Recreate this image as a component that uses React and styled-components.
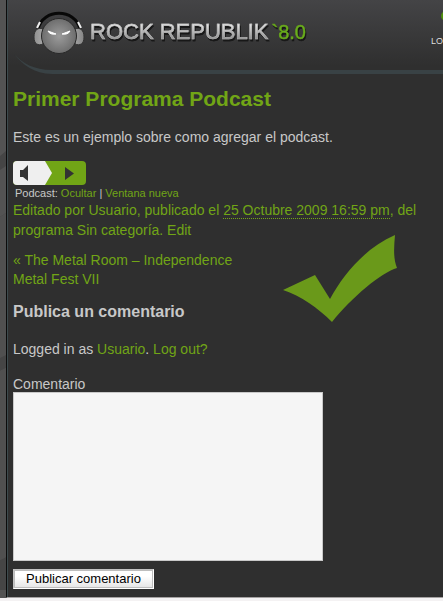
import React from "react";
import styled, { createGlobalStyle } from "styled-components";

const GlobalStyle = createGlobalStyle`
  * { box-sizing: border-box; }
  html, body, #root { min-height: 100vh; }
  body {
    margin: 0;
    background: #2f2f2f;
    color: #c8c8c8;
    font: 14px/20px "Liberation Sans", Arial, sans-serif;
  }
  #root { display: flex; }
`;

const green = "#71a516";

const Page = styled.div`
  flex: 1;
  min-width: 0;
  display: grid;
  grid-template-columns: 6px minmax(0, 1fr);
  border-bottom: 3px solid #f4f2f3;
`;

const Rail = styled.div`
  background: #535353;
  overflow: hidden;
  svg { display: block; }
`;

const Column = styled.div`
  border-left: 1px solid #0c0c0c;
  border-bottom: 1px solid #a5a2a2;
  box-shadow: inset 1px 0 #3d4b4e;
`;

const Header = styled.header`
  margin-left: 1px;
  background: linear-gradient(#444446, #2f2f2f 66px);
`;

const Brand = styled.div`
  display: flex;
  justify-content: space-between;
  height: 54px;
  padding: 10px 0 0 25px;
  overflow: hidden;
`;

const Logo = styled.a`
  display: flex;
  align-items: center;
  gap: 5px;
  text-decoration: none;
  white-space: nowrap;
`;

const Name = styled.span`
  font-size: 22px;
  line-height: 24px;
  -webkit-text-stroke: 0.5px #b5b5b5;
  background: linear-gradient(#e2e2e2 20%, #888 85%);
  background-clip: text;
  color: transparent;
  filter: drop-shadow(1px 2px 0 #171717);
`;

const Version = styled.span`
  font-size: 20px;
  line-height: 24px;
  margin-left: -2px;
  -webkit-text-stroke: 0.5px #68a41b;
  color: #68b01b;
  filter: drop-shadow(1px 2px 0 #171717);
`;

const Login = styled.a`
  width: 12px;
  flex: none;
  display: flex;
  flex-direction: column;
  align-items: flex-end;
  gap: 15px;
  font-size: 9px;
  line-height: 12px;
  color: #dedede;
  text-decoration: none;
`;

const Divider = styled.div`
  display: flex;
  height: 20px;
  padding-left: 6px;
  svg { flex: none; }
  &::after {
    content: "";
    flex: 1;
    height: 4px;
    margin-top: 16px;
    background: #394245;
  }
`;

const Article = styled.main`
  padding: 12px 6px 8px;
`;

const Title = styled.h1`
  margin: 0 0 15px;
  font-size: 21px;
  line-height: 26px;
  color: ${green};
`;

const Text = styled.p`
  margin: 0;
`;

const Link = styled.a`
  color: ${green};
  text-decoration: none;
`;

const Player = styled.button`
  display: block;
  margin: 14px 0 0;
  padding: 0;
  border: 0;
  background: none;
  svg { display: block; }
`;

const Caption = styled.p`
  margin: 2px 0 0 2px;
  font-size: 11px;
  line-height: 13px;
`;

const Meta = styled.p`
  margin: 0;
  color: ${green};
`;

const Time = styled.time`
  border-bottom: 1px dotted ${green};
`;

const Around = styled.div`
  position: relative;
  padding-top: 11px;
`;

const Previous = styled.nav`
  max-width: 240px;
  line-height: 19px;
`;

const Tick = styled.svg`
  position: absolute;
  left: 270px;
  top: -6px;
`;

const Subtitle = styled.h2`
  margin: 13px 0 17px;
  font-size: 16px;
  line-height: 20px;
`;

const Form = styled.form`
  margin-top: 17px;
`;

const Label = styled.label`
  display: block;
  line-height: 16px;
`;

const Comment = styled.textarea`
  display: block;
  width: 310px;
  max-width: 100%;
  height: 169px;
  border: 1px solid #c9c9c9;
  border-radius: 0;
  background: #f5f5f5;
  resize: none;
  outline: 0;
`;

const Submit = styled.button`
  display: block;
  height: 20px;
  margin-top: 8px;
  padding: 0 12px;
  border: 1px solid;
  border-color: #c2c2c2 #fff #fff #c2c2c2;
  box-shadow: inset 0 0 0 1px #bdbdbd;
  background: linear-gradient(#fff 35%, #e4e4e4);
  color: #000;
  font: 13px/16px "Liberation Sans", Arial, sans-serif;
`;

function Mascot() {
  return (
    <svg width="52" height="44" viewBox="0 0 52 44" aria-hidden="true">
      <defs>
        <radialGradient id="face">
          <stop offset="0" stopColor="#9c9c9c" />
          <stop offset="1" stopColor="#6d6d6d" />
        </radialGradient>
        <linearGradient id="cup" x2="1">
          <stop offset="0" stopColor="#909090" />
          <stop offset=".5" stopColor="#d0d0d0" />
          <stop offset="1" stopColor="#858585" />
        </linearGradient>
      </defs>
      <path d="M5 19C10-2 42-2 47 19" fill="none" stroke="#080808" strokeWidth="3" />
      <path d="M4 18L7 12M48 18L45 12" stroke="#eee" strokeWidth="2" />
      <path d="M10 19C5 17 1 20 1 27S5 36 10 34ZM42 19C47 17 51 20 51 27S47 36 42 34Z" fill="url(#cup)" stroke="#333" />
      <circle cx="26" cy="26" r="17.5" fill="url(#face)" stroke="#292929" />
      <path d="M15 21L23 24Q17 25 15 21M37 21L29 24Q35 25 37 21" fill="#fff" stroke="#fff" />
    </svg>
  );
}

export default function App() {
  return (
    <>
      <GlobalStyle />
      <Page>
        <Rail>
          <svg width="6" height="590" aria-hidden="true">
            <path d="M0 156L6 151V166L0 170ZM0 217L6 213V597H0V560L6 557V368L0 371Z" fill="#454545" />
            <path d="M0 217L6 213V355L0 358ZM0 371L6 368V557L0 560Z" fill="#505050" />
          </svg>
        </Rail>
        <Column>
          <Header>
            <Brand>
              <Logo href="#">
                <Mascot />
                <Name>ROCK REPUBLIK</Name>
                <Version>`8.0</Version>
              </Logo>
              <Login href="#">
                <svg width="2" height="10" aria-hidden="true">
                  <circle cx="5" cy="6" r="5" fill="#4f910b" />
                </svg>
                LO
              </Login>
            </Brand>
            <Divider>
              <svg width="38" height="20" aria-hidden="true">
                <path d="M0 0C8 9 20 16 38 16V20C20 20 8 10 0 0Z" fill="#394245" />
              </svg>
            </Divider>
          </Header>
          <Article>
            <Title>Primer Programa Podcast</Title>
            <Text>Este es un ejemplo sobre como agregar el podcast.</Text>
            <Player type="button" aria-label="Reproducir">
              <svg width="73" height="24" aria-hidden="true">
                <rect width="73" height="24" rx="4" fill="#71a516" />
                <path d="M4 0H32L39 12L32 24H4Q0 24 0 20V4Q0 0 4 0Z" fill="#efefef" />
                <path d="M7 9H10L15 4V20L10 16H7ZM52 6L61 12.500L52 19Z" fill="#333" />
              </svg>
            </Player>
            <Caption>
              Podcast: <Link href="#">Ocultar</Link> | <Link href="#">Ventana nueva</Link>
            </Caption>
            <Meta>
              Editado por Usuario, publicado el <Time>25 Octubre 2009 16:59 pm</Time>, del
              programa <Link href="#">Sin categoría</Link>. <Link href="#">Edit</Link>
            </Meta>
            <Around>
              <Previous>
                <Link href="#">« The Metal Room – Independence Metal Fest VII</Link>
              </Previous>
              <Tick width="114" height="89" aria-hidden="true">
                <path d="M0 56L32 41L47 65C60 41 82 14 112 1C111 13 110 24 114 34C99 38 68 64 49 88C35 74 18 62 0 56Z" fill="#6a991a" />
              </Tick>
            </Around>
            <Subtitle>Publica un comentario</Subtitle>
            <Text>
              Logged in as <Link href="#">Usuario</Link>. <Link href="#">Log out?</Link>
            </Text>
            <Form onSubmit={(event) => event.preventDefault()}>
              <Label htmlFor="comment">Comentario</Label>
              <Comment id="comment" />
              <Submit type="submit">Publicar comentario</Submit>
            </Form>
          </Article>
        </Column>
      </Page>
    </>
  );
}
